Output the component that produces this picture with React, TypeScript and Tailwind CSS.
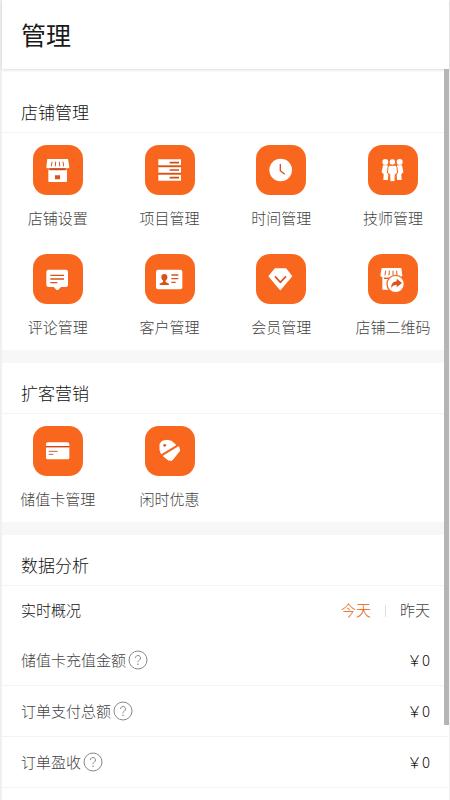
import React, { useState } from 'react';

interface MenuItem {
  label: string;
  icon: React.ReactNode;
}

interface StatRow {
  label: string;
  value: number;
}

const shopItems: MenuItem[] = [
  {
    label: '店铺设置',
    icon: (
      <>
        <path d="M43 42H105L109 66Q109 70 104 70H44Q39 70 40 66Z" fill="#fff" />
        <path d="M46 74H102V108Q102 111 99 111H49Q46 111 46 108Z" fill="#fff" />
        <path d="M50 70H98V76H50Z" fill="#c8501c" />
        <path d="M57 50L55 64M68 50L67 64M79 50L80 64M90 50L92 64" stroke="#e0591c" strokeWidth="3" />
        <path d="M66 91H81V103H66Z" fill="#d9531a" />
      </>
    ),
  },
  {
    label: '项目管理',
    icon: (
      <>
        <path d="M40 43H108V61H40ZM40 67H108V83H40ZM40 89H108V107H40Z" fill="#fff" />
        <path d="M40 64H108M40 86H108" stroke="#c8501c" strokeWidth="3" />
        <path d="M74 53H102M74 75H102M74 98H102" stroke="#c8501c" strokeWidth="5" />
      </>
    ),
  },
  {
    label: '时间管理',
    icon: (
      <>
        <circle cx="74" cy="75" r="34" fill="#fff" />
        <path d="M73 57V77L86 88" fill="none" stroke="#d9531a" strokeWidth="4" />
      </>
    ),
  },
  {
    label: '技师管理',
    icon: (
      <>
        <g fill="#fff">
          <circle cx="52" cy="51" r="9" />
          <circle cx="95" cy="51" r="9" />
          <path d="M45 61H58L62 66L60 105H46L47 88L41 81Z" />
          <path d="M89 61H102L106 81L100 88L101 105H87L85 66Z" />
        </g>
        <g fill="#fff" stroke="#f9671f" strokeWidth="3">
          <circle cx="73" cy="51" r="10" />
          <path d="M65 61H82Q86 62 87 67L89 84L82 88L81 110H66L65 88L58 84L60 67Q61 62 65 61Z" />
        </g>
      </>
    ),
  },
  {
    label: '评论管理',
    icon: (
      <>
        <path d="M47 47H98Q105 47 105 54V92Q105 99 98 99H84L76 107Q73 109 70 107L62 99H47Q40 99 40 92V54Q40 47 47 47Z" fill="#fff" />
        <path d="M52 64H93M52 75H93M52 86H73" stroke="#d9531a" strokeWidth="4" />
      </>
    ),
  },
  {
    label: '客户管理',
    icon: (
      <>
        <rect x="33" y="47" width="79" height="59" rx="6" fill="#fff" />
        <ellipse cx="58" cy="70" rx="9" ry="10" fill="#d9531a" />
        <path d="M54 76H62V84L72 89V93H44V89L54 84Z" fill="#d9531a" />
        <path d="M79 63H100M79 74H100M79 85H92" stroke="#d9531a" strokeWidth="4" />
      </>
    ),
  },
  {
    label: '会员管理',
    icon: (
      <>
        <path d="M58 45H89L106 67L73 106L40 67Z" fill="#fff" stroke="#fff" strokeWidth="5" strokeLinejoin="round" />
        <path d="M57 67L73 85L90 67" fill="none" stroke="#d9531a" strokeWidth="5" />
      </>
    ),
  },
  {
    label: '店铺二维码',
    icon: (
      <>
        <path d="M41 42H100L103 65L98 70H42L37 65Z" fill="#fff" />
        <path d="M43 70H100V107H43Z" fill="#fff" />
        <path d="M48 73H98" stroke="#e0591c" strokeWidth="4" />
        <path d="M53 50L51 64M64 50L63 64M75 50L75 64M86 50L87 64" stroke="#e0591c" strokeWidth="3" />
        <circle cx="83" cy="90" r="26" fill="#fff" stroke="#f9671f" strokeWidth="4" />
        <path d="M86 74L102 87L86 100V92Q76 92 69 101Q70 83 86 82Z" fill="#d9531a" />
      </>
    ),
  },
];

const marketingItems: MenuItem[] = [
  {
    label: '储值卡管理',
    icon: (
      <>
        <path d="M44 49H104Q109 49 109 54V60H39V54Q39 49 44 49Z" fill="#fff" />
        <path d="M39 64H109V95Q109 100 104 100H44Q39 100 39 95Z" fill="#fff" />
        <path d="M39 62H109" stroke="#d0461c" strokeWidth="4" />
        <path d="M47 76H74M47 85H61" stroke="#c8623c" strokeWidth="3" />
      </>
    ),
  },
  {
    label: '闲时优惠',
    icon: (
      <>
        <path d="M45 54L51 46L66 43L80 46L92 57L49 83L45 72Z" fill="#fff" stroke="#fff" strokeWidth="3" strokeLinejoin="round" />
        <path d="M55 90L101 62L104 74L81 103L70 102Z" fill="#fff" stroke="#fff" strokeWidth="3" strokeLinejoin="round" />
        <circle cx="59" cy="58" r="4" fill="#d9531a" />
      </>
    ),
  },
];

const stats: StatRow[] = [
  { label: '储值卡充值金额', value: 0 },
  { label: '订单支付总额', value: 0 },
  { label: '订单盈收', value: 0 },
];

function SectionTitle({ children }: { children: React.ReactNode }) {
  return (
    <h2 className="h-[51px] border-b border-[#f3f3f3] px-[19px] pt-3 text-[17px] leading-9 text-[#111]">
      {children}
    </h2>
  );
}

function MenuGrid({ items }: { items: MenuItem[] }) {
  return (
    <div className="grid grid-cols-4 gap-y-[26px] pt-3 pb-[13px]">
      {items.map((item) => (
        <button key={item.label} type="button" className="flex flex-col items-center gap-[13px]">
          <svg viewBox="0 0 150 150" className="size-[50px] rounded-[14px] bg-[#f9671f]" aria-hidden="true">
            {item.icon}
          </svg>
          <span className="text-[15px] leading-5 whitespace-nowrap text-[#444]">{item.label}</span>
        </button>
      ))}
    </div>
  );
}

function HelpIcon() {
  return (
    <svg viewBox="0 0 20 20" className="size-5" fill="none" stroke="#888" aria-hidden="true">
      <circle cx="10" cy="10" r="9" />
      <path d="M7.500 8a2.500 2.500 0 1 1 3.800 2.100C10.400 10.700 10 11 10 12.200" />
      <circle cx="10" cy="14.300" r=".8" fill="#888" stroke="none" />
    </svg>
  );
}

export default function App() {
  const [day, setDay] = useState<'today' | 'yesterday'>('today');

  return (
    <div className="min-h-screen border-r border-l-2 border-[#f0f0f0] bg-white font-['Noto_Sans_CJK_SC',sans-serif] font-light">
      {/* Header */}
      <header className="h-[69px] bg-white px-[19px] shadow-[0_1px_3px_rgba(0,0,0,0.15)]">
        <h1 className="text-[25px] leading-[68px] font-normal text-[#1a1a1a]">管理</h1>
      </header>

      <main className="relative pt-[13px]">
        <section>
          <SectionTitle>店铺管理</SectionTitle>
          <MenuGrid items={shopItems} />
        </section>

        <section className="border-t-[13px] border-[#f7f7f7]">
          <SectionTitle>扩客营销</SectionTitle>
          <MenuGrid items={marketingItems} />
        </section>

        <section className="border-t-[13px] border-[#f7f7f7]">
          <SectionTitle>数据分析</SectionTitle>
          <div className="flex h-[49px] items-center justify-between px-[19px] text-[15px]">
            <h3 className="text-[#111]">实时概况</h3>
            <div className="flex items-center">
              <button
                type="button"
                onClick={() => setDay('today')}
                className={day === 'today' ? 'text-[#e85a00]' : 'text-[#444]'}
              >
                今天
              </button>
              <span className="mx-3.5 h-3 w-px bg-[#ddd]" />
              <button
                type="button"
                onClick={() => setDay('yesterday')}
                className={day === 'yesterday' ? 'text-[#e85a00]' : 'text-[#444]'}
              >
                昨天
              </button>
            </div>
          </div>

          <dl className="text-[15px]">
            {stats.map((row) => (
              <div
                key={row.label}
                className="flex h-[51px] items-center justify-between border-b border-[#f3f3f3] px-[19px]"
              >
                <dt className="flex items-center gap-0.5 text-[#444]">
                  {row.label}
                  <button type="button" aria-label="说明">
                    <HelpIcon />
                  </button>
                </dt>
                <dd className="text-[#111]">￥{row.value}</dd>
              </div>
            ))}
          </dl>
        </section>

        {/* Scroll indicator */}
        <div className="absolute top-0 right-0 h-[656px] w-[5px] bg-[#b5b5b5]" />
      </main>
    </div>
  );
}
